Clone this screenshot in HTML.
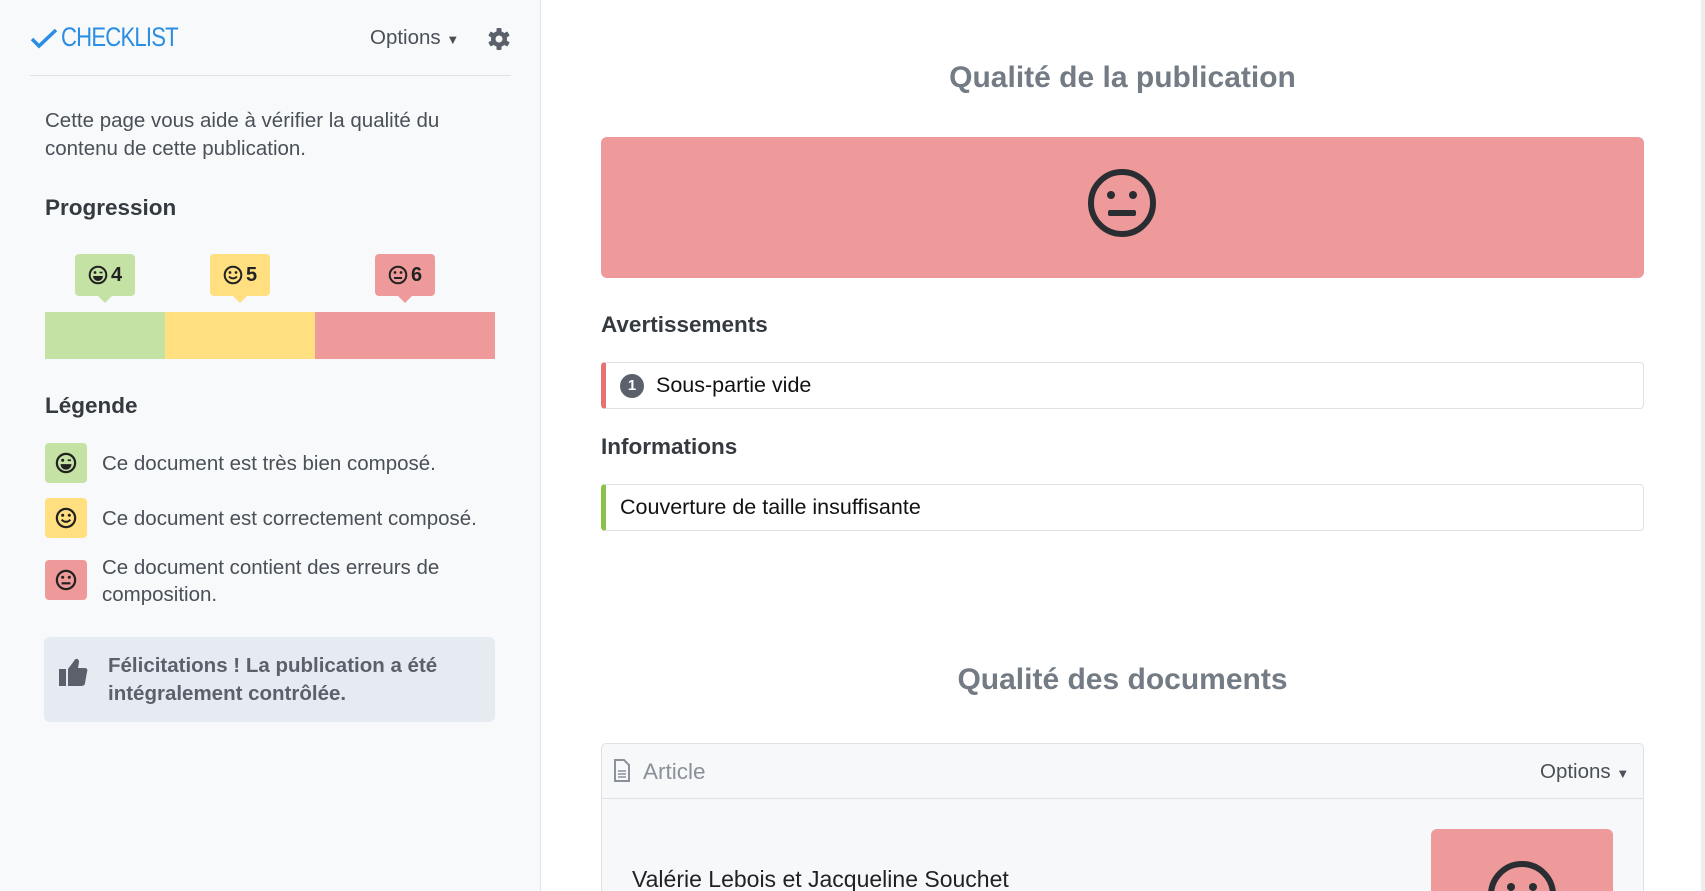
<!DOCTYPE html>
<html><head><meta charset="utf-8"><style>
*{box-sizing:border-box;margin:0;padding:0}
html,body{width:1705px;height:891px;overflow:hidden}
body{font-family:"Liberation Sans",sans-serif;background:#fff;color:#343a40}
#w{position:relative;width:1705px;height:891px;overflow:hidden}
.side{position:absolute;left:0;top:0;width:541px;height:891px;background:#f8f9fa;border-right:1px solid #e3e5e8}
.abs{position:absolute}
.logo{left:61px;top:22px;font-size:27px;color:#2b8de3;letter-spacing:-1px;transform:scaleX(.82);transform-origin:left}
.opt{font-size:20.5px;color:#495057}
.hr{left:30px;top:75px;width:481px;height:1px;background:#dee2e6}
.p{left:45px;font-size:20.5px;color:#495057;line-height:28px}
.h{font-size:22.5px;font-weight:bold;color:#343a40}
.badge{top:254px;height:42px;border-radius:4px;font-weight:bold;font-size:20px;display:flex;align-items:center;justify-content:center;gap:3px;color:#222}
.badge:after{content:"";position:absolute;bottom:-7px;left:50%;margin-left:-7px;border:7px solid transparent;border-bottom:0;border-top-color:inherit}
.g{background:#c5e2a5;border-color:#c5e2a5}.y{background:#ffdf80;border-color:#ffdf80}.r{background:#ee9a9a;border-color:#ee9a9a}
.li{left:45px;width:42px;height:40px;border-radius:4px;display:flex;align-items:center;justify-content:center}
.lt{left:102px;font-size:20.5px;color:#495057;line-height:27px}
.item{left:601px;width:1043px;height:47px;border:1px solid #dee2e6;border-radius:4px;background:#fff;font-size:21.5px;color:#111;display:flex;align-items:center;padding-left:14px}
.title{left:601px;width:1043px;text-align:center;font-size:30px;font-weight:bold;color:#737b84}
</style></head><body><div id="w">
<div class="side">
<svg class="abs" style="left:30px;top:28px" width="28" height="22" viewBox="0 0 28 22"><path d="M2 11l7 7L26 2" fill="none" stroke="#2b8de3" stroke-width="3.5"/></svg>
<div class="abs logo">CHECKLIST</div>
<div class="abs opt" style="left:370px;top:26px">Options <span style="font-size:13px">▼</span></div>
<svg class="abs" style="left:487px;top:27px" width="24" height="24" viewBox="0 0 24 24"><g fill="#5a616b"><circle cx="12" cy="12" r="8"/><rect x="9.5" y="1" width="5" height="22" rx="1"/><rect x="9.5" y="1" width="5" height="22" rx="1" transform="rotate(60 12 12)"/><rect x="9.5" y="1" width="5" height="22" rx="1" transform="rotate(120 12 12)"/></g><circle cx="12" cy="12" r="3.5" fill="#f8f9fa"/></svg>
<div class="abs hr"></div>
<div class="abs p" style="top:107px">Cette page vous aide à vérifier la qualité du<br>contenu de cette publication.</div>
<div class="abs h" style="left:45px;top:195px">Progression</div>
<div class="abs badge g" style="left:75px;width:60px"><svg width="20" height="20" viewBox="0 0 20 20"><circle cx="10" cy="10" r="8.3" fill="none" stroke="#222" stroke-width="2"/><circle cx="7" cy="7.5" r="1.4" fill="#222"/><path d="M11.5 7.5h3" stroke="#222" stroke-width="1.6"/><path d="M5 11h10a5 5 0 0 1-10 0z" fill="#222"/></svg>4</div>
<div class="abs badge y" style="left:210px;width:60px"><svg width="20" height="20" viewBox="0 0 20 20"><circle cx="10" cy="10" r="8.3" fill="none" stroke="#222" stroke-width="2"/><circle cx="7" cy="7.5" r="1.4" fill="#222"/><circle cx="13" cy="7.5" r="1.4" fill="#222"/><path d="M6 11.5q4 4 8 0" fill="none" stroke="#222" stroke-width="1.8"/></svg>5</div>
<div class="abs badge r" style="left:375px;width:60px"><svg width="20" height="20" viewBox="0 0 20 20"><circle cx="10" cy="10" r="8.3" fill="none" stroke="#222" stroke-width="2"/><circle cx="7" cy="7.5" r="1.4" fill="#222"/><circle cx="13" cy="7.5" r="1.4" fill="#222"/><path d="M6 13h8" stroke="#222" stroke-width="2"/></svg>6</div>
<div class="abs" style="left:45px;top:312px;width:120px;height:47px;background:#c5e2a5"></div>
<div class="abs" style="left:165px;top:312px;width:150px;height:47px;background:#ffdf80"></div>
<div class="abs" style="left:315px;top:312px;width:180px;height:47px;background:#ee9a9a"></div>
<div class="abs h" style="left:45px;top:393px">Légende</div>
<div class="abs li g" style="top:443px"><svg width="22" height="22" viewBox="0 0 20 20"><circle cx="10" cy="10" r="8.3" fill="none" stroke="#222" stroke-width="2"/><circle cx="7" cy="7.5" r="1.4" fill="#222"/><path d="M11.5 7.5h3" stroke="#222" stroke-width="1.6"/><path d="M5 11h10a5 5 0 0 1-10 0z" fill="#222"/></svg></div>
<div class="abs lt" style="top:450px">Ce document est très bien composé.</div>
<div class="abs li y" style="top:498px"><svg width="22" height="22" viewBox="0 0 20 20"><circle cx="10" cy="10" r="8.3" fill="none" stroke="#222" stroke-width="2"/><circle cx="7" cy="7.5" r="1.4" fill="#222"/><circle cx="13" cy="7.5" r="1.4" fill="#222"/><path d="M6 11.5q4 4 8 0" fill="none" stroke="#222" stroke-width="1.8"/></svg></div>
<div class="abs lt" style="top:505px">Ce document est correctement composé.</div>
<div class="abs li r" style="top:560px"><svg width="22" height="22" viewBox="0 0 20 20"><circle cx="10" cy="10" r="8.3" fill="none" stroke="#222" stroke-width="2"/><circle cx="7" cy="7.5" r="1.4" fill="#222"/><circle cx="13" cy="7.5" r="1.4" fill="#222"/><path d="M6 13h8" stroke="#222" stroke-width="2"/></svg></div>
<div class="abs lt" style="top:554px">Ce document contient des erreurs de<br>composition.</div>
<div class="abs" style="left:44px;top:637px;width:451px;height:85px;background:#e6eaf1;border-radius:6px"></div>
<svg class="abs" style="left:58px;top:656px" width="30" height="32" viewBox="0 0 30 32"><rect x="1" y="13" width="7" height="17" fill="#5a616b"/><path d="M10 13l6-8c1-3 5-3 5 1l-1 6h7c2 0 3 2 2 4l-2 11c0 2-2 3-4 3H10z" fill="#5a616b"/></svg>
<div class="abs" style="left:108px;top:652px;font-size:20.5px;font-weight:bold;color:#5a616b;line-height:28px">Félicitations ! La publication a été<br>intégralement contrôlée.</div>
</div>
<div class="abs title" style="top:61px">Qualité de la publication</div>
<div class="abs" style="left:601px;top:137px;width:1043px;height:141px;background:#ee9a9a;border-radius:6px"></div>
<svg class="abs" style="left:1087px;top:168px" width="70" height="70" viewBox="0 0 70 70"><circle cx="35" cy="35" r="31" fill="none" stroke="#2a2d31" stroke-width="6"/><circle cx="24" cy="27" r="4" fill="#2a2d31"/><circle cx="46" cy="27" r="4" fill="#2a2d31"/><rect x="21" y="42" width="28" height="6" rx="2" fill="#2a2d31"/></svg>
<div class="abs h" style="left:601px;top:312px">Avertissements</div>
<div class="abs item" style="top:362px;border-left:5px solid #e57373"><span style="display:inline-flex;width:24px;height:24px;border-radius:50%;background:#5a616b;color:#fff;font-size:15px;font-weight:bold;align-items:center;justify-content:center;margin-right:12px">1</span>Sous-partie vide</div>
<div class="abs h" style="left:601px;top:434px">Informations</div>
<div class="abs item" style="top:484px;border-left:5px solid #8bc34a">Couverture de taille insuffisante</div>
<div class="abs title" style="top:663px">Qualité des documents</div>
<div class="abs" style="left:601px;top:743px;width:1043px;height:160px;border:1px solid #dee2e6;border-radius:5px;background:#f7f8fa"></div>
<div class="abs" style="left:602px;top:798px;width:1041px;height:1px;background:#dee2e6"></div>
<svg class="abs" style="left:613px;top:759px" width="18" height="23" viewBox="0 0 18 23"><path d="M2 1h9l5 5v16H2z" fill="none" stroke="#8a9199" stroke-width="2"/><path d="M5 12h8M5 15h8M5 18h8" stroke="#8a9199" stroke-width="1.6"/></svg>
<div class="abs" style="left:643px;top:759px;font-size:22.5px;color:#8a9199">Article</div>
<div class="abs opt" style="left:1540px;top:760px">Options <span style="font-size:13px">▼</span></div>
<div class="abs" style="left:632px;top:866px;font-size:23px;color:#222">Valérie Lebois et Jacqueline Souchet</div>
<div class="abs" style="left:1431px;top:829px;width:182px;height:80px;background:#ee9a9a;border-radius:6px"></div>
<svg class="abs" style="left:1487px;top:860px" width="70" height="70" viewBox="0 0 70 70"><circle cx="35" cy="35" r="31" fill="none" stroke="#2a2d31" stroke-width="6"/><circle cx="24" cy="27" r="4" fill="#2a2d31"/><circle cx="46" cy="27" r="4" fill="#2a2d31"/></svg>
<div class="abs" style="left:1701px;top:0;width:4px;height:891px;background:#eceef0"></div>
</div></body></html>
